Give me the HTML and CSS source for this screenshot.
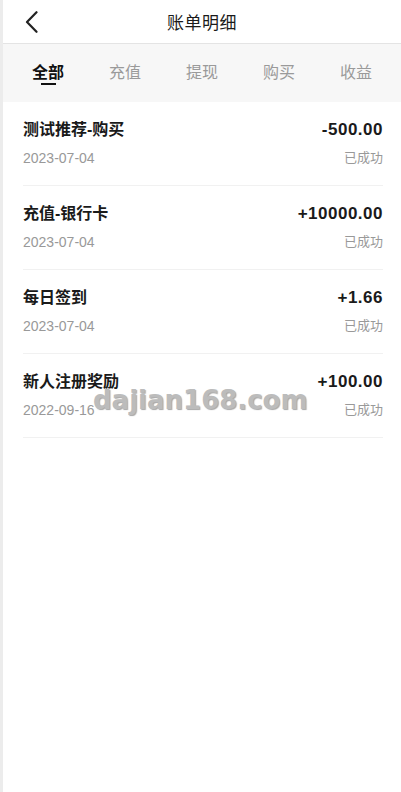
FILE: index.html
```html
<!DOCTYPE html>
<html lang="zh-CN">
<head>
<meta charset="utf-8">
<title>账单明细</title>
<link rel="stylesheet" href="styles.css">
</head>
<body>
<div class="page">
  <header class="header">
    <a class="back" href="#" aria-label="返回">
      <svg width="13" height="22" viewBox="0 0 13 22"><path d="M11.5 1.2 L2 11 L11.5 20.8" fill="none" stroke="#222" stroke-width="2.2" stroke-linecap="round" stroke-linejoin="round"/></svg>
    </a>
    <h1 class="title">账单明细</h1>
    <span></span>
  </header>

  <nav class="tabs">
    <div class="tab active"><span>全部</span><i class="bar"></i></div>
    <div class="tab"><span>充值</span></div>
    <div class="tab"><span>提现</span></div>
    <div class="tab"><span>购买</span></div>
    <div class="tab"><span>收益</span></div>
  </nav>

  <ul class="list">
    <li class="item">
      <div class="row main"><span class="name">测试推荐-购买</span><span class="amount">-500.00</span></div>
      <div class="row sub"><span class="date">2023-07-04</span><span class="status">已成功</span></div>
    </li>
    <li class="item">
      <div class="row main"><span class="name">充值-银行卡</span><span class="amount">+10000.00</span></div>
      <div class="row sub"><span class="date">2023-07-04</span><span class="status">已成功</span></div>
    </li>
    <li class="item">
      <div class="row main"><span class="name">每日签到</span><span class="amount">+1.66</span></div>
      <div class="row sub"><span class="date">2023-07-04</span><span class="status">已成功</span></div>
    </li>
    <li class="item">
      <div class="row main"><span class="name">新人注册奖励</span><span class="amount">+100.00</span></div>
      <div class="row sub"><span class="date">2022-09-16</span><span class="status">已成功</span></div>
    </li>
  </ul>

  <div class="watermark">dajian168.com</div>
</div>
</body>
</html>
```

FILE: styles.css
```css
* { box-sizing: border-box; }

html, body {
  margin: 0;
  padding: 0;
  background: #fff;
}

body {
  font-family: "Liberation Sans", "Noto Sans CJK SC", sans-serif;
  color: #1a1a1a;
}

.page {
  position: relative;
  min-height: 792px;
  border-left: 3px solid #ececec;
  background: #fff;
}

/* top bar */
.header {
  height: 44px;
  border-bottom: 1px solid #e4e4e4;
  display: grid;
  grid-template-columns: 1fr auto 1fr;
  align-items: center;
}

.back {
  display: flex;
  align-items: center;
  padding-left: 22px;
  height: 43px;
}

.title {
  margin: 0;
  font-size: 17px;
  font-weight: normal;
  color: #1a1a1a;
  letter-spacing: 0.5px;
}

/* filter tabs */
.tabs {
  background: #f7f7f7;
  height: 58px;
  padding-top: 19px;
  display: grid;
  grid-template-columns: repeat(5, 77px);
  justify-content: center;
  align-items: start;
}

.tab {
  display: flex;
  flex-direction: column;
  align-items: center;
  font-size: 16px;
  line-height: 20px;
  color: #9a9a9a;
}

.tab.active {
  color: #111;
  font-weight: bold;
}

.bar {
  display: block;
  width: 15px;
  height: 2px;
  background: #111;
}

/* records */
.list {
  list-style: none;
  margin: 0;
  padding: 0 18px 0 20px;
}

.item {
  padding: 16px 0 17px;
  border-bottom: 1px solid #f1f1f1;
}

.row {
  display: flex;
  justify-content: space-between;
  align-items: center;
}

.main {
  line-height: 24px;
}

.name {
  font-size: 16px;
  font-weight: bold;
  color: #1a1a1a;
}

.amount {
  font-size: 17px;
  font-weight: bold;
  letter-spacing: 0.5px;
  color: #1a1a1a;
}

.sub {
  margin-top: 6px;
  line-height: 20px;
  color: #999;
}

.date {
  font-size: 14px;
}

.status {
  font-size: 13px;
}

.watermark {
  position: absolute;
  left: 90px;
  top: 385px;
  font-family: "DejaVu Sans", sans-serif;
  font-weight: bold;
  font-size: 26px;
  color: #bcbcbc;
  text-shadow: 1px 1px 1px rgba(0, 0, 0, 0.35);
  pointer-events: none;
}
```
